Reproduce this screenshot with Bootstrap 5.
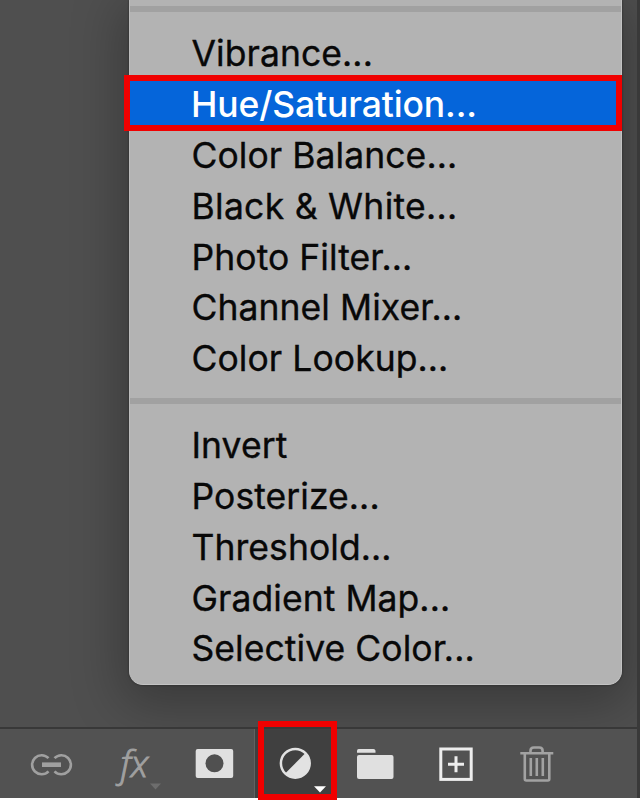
<!DOCTYPE html>
<html lang="en">
<head>
<meta charset="utf-8">
<title>Adjustment layer menu</title>
<link href="https://cdn.jsdelivr.net/npm/bootstrap@5.3.0/dist/css/bootstrap.min.css" rel="stylesheet">
<style>
html,body{height:800px;overflow:hidden}
body{background:#fff;font-family:Inter,"Liberation Sans",sans-serif}
.panel{height:798px;background:#4f4f4f;border-right:3px solid #393939}
.panel-area{height:729px;border-bottom:2px solid #383838;padding-left:129px;overflow:hidden;background:#4f4f4f}
.adjust-menu{width:493px;height:685px;background:#b3b3b3;border-radius:0 0 14px 14px;border:1px solid #c3c3c3;border-top:0;border-left-color:#bdbdbd;padding-top:6px;box-shadow:0 0 2px #222,0 12px 50px 8px rgba(0,0,0,.27)}
.rule{height:6px;background:#a1a1a1}
.menu-group{padding:15px 0 14.7px}
.menu-entry{height:50.9px;line-height:54.9px;padding-left:61.5px;font-size:35.5px;letter-spacing:.06px;color:#080808;white-space:nowrap;-webkit-text-stroke:.35px currentColor}
.menu-entry.spaced{letter-spacing:.28px}
.menu-entry.chosen{margin:0 -1px 0 -6px;padding-left:67px;color:#fff;font-weight:500;position:relative;letter-spacing:-.13px;-webkit-text-stroke:0}
.menu-entry.chosen::before{content:"";position:absolute;z-index:0;inset:-3px 0 -2.4px 0;border:6px solid #f00000;background:#0565da}
.menu-entry.chosen span{position:relative}
.toolbar{height:69px;padding-left:11px;background:#525252}
.tool{width:81px;height:69px;padding:0;border:0;background:none;flex:none}
.tool svg{display:block}
.tool.active-tool{background:#404040;border-left:1px solid #626262;position:relative}
.active-tool svg{margin-left:-1px}
.active-tool::before{content:"";position:absolute;left:80px;right:-1px;top:0;bottom:0;background:#525252}
.active-tool::after{content:"";position:absolute;left:3px;top:-8px;width:79px;height:79px;border:6px solid #f00000}
</style>
<script src="https://cdn.jsdelivr.net/npm/bootstrap@5.3.0/dist/js/bootstrap.bundle.min.js"></script>
</head>
<body>
<main class="panel d-flex flex-column">
  <section class="panel-area">
    <div class="adjust-menu">
      <div class="rule"></div>
      <div class="menu-group d-flex flex-column">
        <div class="menu-entry">Vibrance...</div>
        <div class="menu-entry chosen"><span>Hue/Saturation...</span></div>
        <div class="menu-entry">Color Balance...</div>
        <div class="menu-entry spaced">Black &amp; White...</div>
        <div class="menu-entry">Photo Filter...</div>
        <div class="menu-entry">Channel Mixer...</div>
        <div class="menu-entry">Color Lookup...</div>
      </div>
      <div class="rule"></div>
      <div class="menu-group d-flex flex-column">
        <div class="menu-entry">Invert</div>
        <div class="menu-entry">Posterize...</div>
        <div class="menu-entry">Threshold...</div>
        <div class="menu-entry">Gradient Map...</div>
        <div class="menu-entry">Selective Color...</div>
      </div>
    </div>
  </section>
  <nav class="toolbar d-flex" aria-label="Layer tools">
    <button class="tool" aria-label="Link layers"><svg width="81" height="69" viewBox="11 729 81 69" fill="none" stroke="#a0a0a0"><path d="M48.5 758.2A9.5 9.5 0 1 0 48.5 771.3M54.5 758.2A9.5 9.5 0 1 1 54.5 771.3" stroke-width="2.6"/><path d="M42 764.7H61" stroke-width="4.6"/></svg></button>
    <button class="tool" aria-label="Layer effects"><svg width="81" height="69" viewBox="92 729 81 69"><text x="120.5" y="776.5" font-family="Open Sans" font-style="italic" font-weight="300" font-size="37" fill="#a0a0a0" stroke="#a0a0a0" stroke-width="1">fx</text><path d="M150 783.5h11l-5.5 6z" fill="#6d6d6d"/></svg></button>
    <button class="tool" aria-label="Add mask"><svg width="81" height="69" viewBox="173 729 81 69"><rect x="195.7" y="749" width="37.5" height="29" rx="2" fill="#e0e0e0"/><circle cx="214.5" cy="763.3" r="9" fill="#505050"/></svg></button>
    <button class="tool active-tool" aria-label="Adjustment layer"><svg width="81" height="69" viewBox="254 729 81 69"><circle cx="295.3" cy="763.3" r="14.4" fill="#404040" stroke="#e2e2e2" stroke-width="2.5"/><path d="M305.5 753.1A14.4 14.4 0 0 1 285.1 773.5Z" fill="#e2e2e2"/><path d="M314 786.3h12l-6 6.2z" fill="#fff"/></svg></button>
    <button class="tool" aria-label="New group"><svg width="81" height="69" viewBox="335 729 81 69" fill="#e0e0e0"><path d="M357 752.7v-2q0-1.7 1.7-1.7h14.8q1.7 0 2 1.7v2z"/><rect x="357" y="755" width="36.5" height="24" rx="2"/></svg></button>
    <button class="tool" aria-label="New layer"><svg width="81" height="69" viewBox="416 729 81 69" fill="none" stroke="#ededed" stroke-width="3"><rect x="440.8" y="749" width="30.4" height="30.4"/><path d="M448 764.2h16M456 756.2v16"/></svg></button>
    <button class="tool" aria-label="Delete layer"><svg width="81" height="69" viewBox="497 729 81 69" fill="none" stroke="#a2a2a2" stroke-width="2.6"><path d="M520.3 753.3h33M530.5 753v-2.2q0-3.3 3.3-3.3h5.5q3.3 0 3.3 3.3v2.2M524.8 754v25q0 1.5 1.5 1.5h21.5q1.5 0 1.5-1.5v-25M530.8 758v18M536.8 758v18M542.8 758v18"/></svg></button>
  </nav>
</main>
</body>
</html>
